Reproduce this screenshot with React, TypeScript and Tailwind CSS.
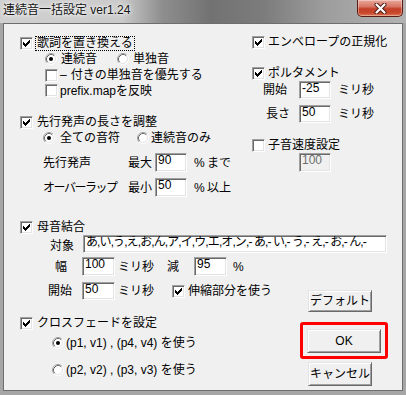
import React from "react";

const Check = ({ checked = false }: { checked?: boolean }) => (
  <span className="flex-none w-[13px] h-[13px] bg-white border border-t-[#a0a0a0] border-l-[#a0a0a0] border-r-white border-b-white shadow-[inset_1px_1px_0_#696969,inset_-1px_-1px_0_#e3e3e3]">
    {checked && (
      <svg width="11" height="11" viewBox="0 0 11 11" className="block">
        {[2, 3, 4, 3, 2, 1, 0].map((y, i) => (
          <rect key={i} x={2 + i} y={2 + y} width="1" height="3" fill="#000" />
        ))}
      </svg>
    )}
  </span>
);

const Radio = ({ checked = false }: { checked?: boolean }) => (
  <svg width="12" height="12" viewBox="0 0 12 12" className="flex-none block">
    <circle cx="6" cy="6" r="5" fill="#fff" />
    <path d="M2.11 9.89A5.5 5.5 0 0 1 9.89 2.11" fill="none" stroke="#a0a0a0" />
    <path d="M9.89 2.11A5.5 5.5 0 0 1 2.11 9.89" fill="none" stroke="#ffffff" />
    <path d="M2.82 9.18A4.5 4.5 0 0 1 9.18 2.82" fill="none" stroke="#696969" />
    <path d="M9.18 2.82A4.5 4.5 0 0 1 2.82 9.18" fill="none" stroke="#e3e3e3" />
    {checked && <circle cx="6" cy="6" r="2" fill="#000" />}
  </svg>
);

const Edit = ({ value, className, disabled }: { value: string; className: string; disabled?: boolean }) => (
  <div
    className={`flex-none overflow-hidden whitespace-nowrap border border-t-[#a0a0a0] border-l-[#a0a0a0] border-r-white border-b-white shadow-[inset_1px_1px_0_#696969,inset_-1px_-1px_0_#e3e3e3] pl-[2px] leading-[13px] ${
      disabled ? "bg-[#f0f0f0] text-[#6d6d6d]" : "bg-white text-black"
    } ${className}`}
  >
    {value}
  </div>
);

const Btn = ({ label, className }: { label: string; className: string }) => (
  <div
    className={`flex-none flex items-center justify-center bg-[#f0f0f0] border border-t-[#e3e3e3] border-l-[#e3e3e3] border-r-[#696969] border-b-[#696969] shadow-[inset_1px_1px_0_#fff,inset_-1px_-1px_0_#a0a0a0] ${className}`}
  >
    {label}
  </div>
);

const CloseButton = () => (
  <div className="mr-[3px] w-[46px] h-[17px] flex items-center justify-center rounded-b-[5px] border border-t-0 border-[#5a1d16] bg-[linear-gradient(180deg,#e9a89b_0%,#d87766_40%,#c4402a_55%,#c8462c_80%,#de7a55_100%)] shadow-[inset_0_0_0_1px_rgba(255,255,255,0.35)]">
    <svg width="13" height="11" viewBox="0 0 13 11">
      <path d="M2.5 1.5L10.5 9.5M10.5 1.5L2.5 9.5" stroke="#4a1a14" strokeWidth="4" strokeLinecap="round" />
      <path d="M2.5 1.5L10.5 9.5M10.5 1.5L2.5 9.5" stroke="#ffffff" strokeWidth="2.2" strokeLinecap="round" />
    </svg>
  </div>
);

const target = "あ,い,う,え,お,ん,ア,イ,ウ,エ,オ,ン,- あ,- い,- う,- え,- お,- ん,-";

export default function App() {
  return (
    <div className="w-[406px] h-[395px] overflow-hidden bg-[#a6a6a6] font-['Liberation_Sans','Noto_Sans_CJK_JP',sans-serif] text-[12px] text-black select-none">
      {/* title bar */}
      <div className="h-[23px] flex items-start justify-between bg-[linear-gradient(90deg,#d0d0d0_0%,#cacaca_30%,#8e8e8e_40%,#727272_52%,#7c7c7c_65%,#9d9d9d_80%,#b3b3b3_100%)]">
        <div className="pl-[3px] pt-[2px] leading-[16px] text-[#151515] [text-shadow:0_0_6px_#fff,0_0_3px_#fff]">
          連続音一括設定 ver1.24
        </div>
        <CloseButton />
      </div>

      {/* client */}
      <div className="ml-[3px] w-[400px] h-[368px] border border-[#6e6e6e] bg-[#f0f0f0]">
        <div className="flex pl-[16px] pt-[10px]">
          {/* left column */}
          <div className="w-[232px] flex flex-col mt-[1px]">
            <div className="h-[16px] flex items-center">
              <Check checked />
              <span className="ml-[2px] h-[15px] px-[1px] border border-dotted border-black flex items-center">
                歌詞を置き換える
              </span>
            </div>
            <div className="h-[15px] flex items-center pl-[25px]">
              <Radio checked />
              <span className="ml-[4px]">連続音</span>
              <span className="ml-[20px]">
                <Radio />
              </span>
              <span className="ml-[4px]">単独音</span>
            </div>
            <div className="mt-[1px] h-[16px] flex items-center pl-[25px]">
              <Check />
              <span className="ml-[2px]">–</span>
              <span className="ml-[4px]">付きの単独音を優先する</span>
            </div>
            <div className="h-[15px] flex items-center pl-[25px]">
              <Check />
              <span className="ml-[2px]">prefix.mapを反映</span>
            </div>
            <div className="mt-[16px] h-[16px] flex items-center">
              <Check checked />
              <span className="ml-[4px]">先行発声の長さを調整</span>
            </div>
            <div className="h-[15px] flex items-center pl-[23px]">
              <Radio checked />
              <span className="ml-[5px]">全ての音符</span>
              <span className="ml-[17px]">
                <Radio />
              </span>
              <span className="ml-[2px]">連続音のみ</span>
            </div>
            <div className="mt-[8px] h-[19px] flex items-center">
              <span className="w-[108px] pl-[23px]">先行発声</span>
              <span className="w-[27px]">最大</span>
              <Edit value="90" className="w-[32px] h-[19px]" />
              <span className="w-[20px] pl-[7px]">%</span>
              <span>まで</span>
            </div>
            <div className="mt-[6px] h-[19px] flex items-center">
              <span className="w-[108px] pl-[23px] whitespace-nowrap tracking-[-1.5px]">オーバーラップ</span>
              <span className="w-[27px]">最小</span>
              <Edit value="50" className="w-[32px] h-[19px]" />
              <span className="w-[20px] pl-[7px]">%</span>
              <span>以上</span>
            </div>
          </div>

          {/* right column */}
          <div className="flex flex-col">
            <div className="h-[16px] flex items-center">
              <Check checked />
              <span className="ml-[3px]">エンベロープの正規化</span>
            </div>
            <div className="mt-[15px] h-[16px] flex items-center">
              <Check checked />
              <span className="ml-[3px]">ポルタメント</span>
            </div>
            <div className="h-[18px] flex items-center">
              <span className="w-[47px] pl-[11px]">開始</span>
              <Edit value="-25" className="w-[32px] h-[18px]" />
              <span className="pl-[7px]">ミリ秒</span>
            </div>
            <div className="mt-[6px] h-[18px] flex items-center">
              <span className="w-[47px] pl-[14px]">長さ</span>
              <Edit value="50" className="w-[32px] h-[18px]" />
              <span className="pl-[7px]">ミリ秒</span>
            </div>
            <div className="mt-[14px] h-[16px] flex items-center">
              <Check />
              <span className="ml-[3px]">子音速度設定</span>
            </div>
            <div className="h-[19px] flex items-center pl-[47px]">
              <Edit value="100" className="w-[32px] h-[19px]" disabled />
            </div>
          </div>
        </div>

        {/* bottom section */}
        <div className="pl-[16px] flex flex-col">
          <div className="mt-[22px] h-[16px] flex items-center">
            <Check checked />
            <span className="ml-[4px]">母音結合</span>
          </div>
          <div className="h-[18px] flex items-center">
            <span className="w-[63px] pl-[30px] pt-[3px]">対象</span>
            <Edit value={target} className="w-[304px] h-[18px] tracking-[-0.9px]" />
          </div>
          <div className="mt-[4px] flex">
            <div className="w-[287px] flex flex-col">
              <div className="h-[19px] flex items-center">
                <span className="w-[62px] pl-[35px]">幅</span>
                <Edit value="100" className="w-[33px] h-[19px]" />
                <span className="w-[52px] pl-[3px]">ミリ秒</span>
                <span className="w-[27px]">減</span>
                <Edit value="95" className="w-[33px] h-[19px]" />
                <span className="pl-[6px]">%</span>
              </div>
              <div className="mt-[6px] h-[18px] flex items-center">
                <span className="w-[62px] pl-[28px]">開始</span>
                <Edit value="50" className="w-[33px] h-[18px]" />
                <span className="w-[57px] pl-[3px]">ミリ秒</span>
                <Check checked />
                <span className="ml-[3px]">伸縮部分を使う</span>
              </div>
              <div className="mt-[15px] h-[16px] flex items-center">
                <Check checked />
                <span className="ml-[4px]">クロスフェードを設定</span>
              </div>
              <div className="mt-[4px] h-[16px] flex items-center pl-[32px]">
                <Radio checked />
                <span className="ml-[2px]">(p1, v1) , (p4, v4) を使う</span>
              </div>
              <div className="mt-[11px] h-[16px] flex items-center pl-[32px]">
                <Radio />
                <span className="ml-[2px]">(p2, v2) , (p3, v3) を使う</span>
              </div>
            </div>

            <div className="flex flex-col">
              <Btn label="デフォルト" className="mt-[33px] ml-[1px] w-[64px] h-[22px]" />
              <div className="relative mt-[17px] w-[74px] h-[24px] flex">
                <Btn label="OK" className="w-[74px] h-[24px]" />
                <span className="absolute -left-[7px] -right-[7px] -top-[7px] -bottom-[6px] border-[3px] border-[#ff0000] rounded-[3px] pointer-events-none" />
              </div>
              <Btn label="キャンセル" className="mt-[9px] ml-[1px] w-[64px] h-[24px]" />
            </div>
          </div>
        </div>
      </div>
    </div>
  );
}
